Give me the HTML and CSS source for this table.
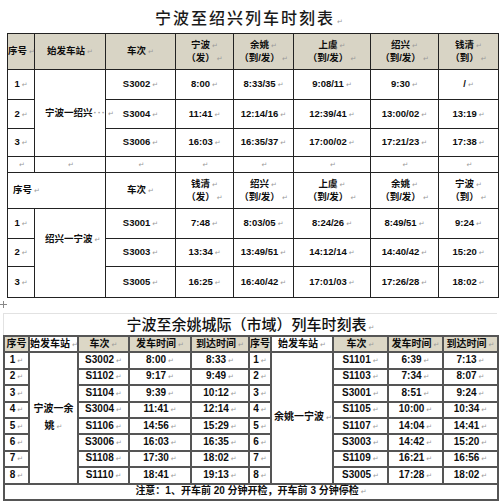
FILE: index.html
```html
<!DOCTYPE html>
<html lang="zh-CN">
<head>
<meta charset="utf-8">
<title>宁波至绍兴列车时刻表</title>
<link rel="stylesheet" href="styles.css">
</head>
<body>
<h1 class="title1">宁波至绍兴列车时刻表<span class="p">↵</span></h1>
<table class="t1">
<colgroup><col class="a1"><col class="a2"><col class="a3"><col class="a4"><col class="a5"><col class="a6"><col class="a7"><col class="a8"></colgroup>
<tr class="hdr shade">
<th>序号<span class="p">↵</span></th>
<th>始发车站<span class="p">↵</span></th>
<th>车次<span class="p">↵</span></th>
<th>宁波<span class="p">↵</span><br>（发）<span class="p">↵</span></th>
<th>余姚<span class="p">↵</span><br>（到/发）<span class="p">↵</span></th>
<th>上虞<span class="p">↵</span><br>（到/发）<span class="p">↵</span></th>
<th>绍兴<span class="p">↵</span><br>（到/发）<span class="p">↵</span></th>
<th>钱清<span class="p">↵</span><br>（到）<span class="p">↵</span></th>
</tr>
<tr class="row r30">
<td>1<span class="p">↵</span></td>
<td rowspan="3" class="stn">宁波一绍兴<span class="dots">···</span><span class="p">↵</span></td>
<td>S3002<span class="p">↵</span></td><td>8:00<span class="p">↵</span></td><td>8:33/35<span class="p">↵</span></td><td>9:08/11<span class="p">↵</span></td><td>9:30<span class="p">↵</span></td><td>/<span class="p">↵</span></td>
</tr>
<tr class="row r29">
<td>2<span class="p">↵</span></td>
<td>S3004<span class="p">↵</span></td><td>11:41<span class="p">↵</span></td><td>12:14/16<span class="p">↵</span></td><td>12:39/41<span class="p">↵</span></td><td>13:00/02<span class="p">↵</span></td><td>13:19<span class="p">↵</span></td>
</tr>
<tr class="row r28">
<td>3<span class="p">↵</span></td>
<td>S3006<span class="p">↵</span></td><td>16:03<span class="p">↵</span></td><td>16:35/37<span class="p">↵</span></td><td>17:00/02<span class="p">↵</span></td><td>17:21/23<span class="p">↵</span></td><td>17:38<span class="p">↵</span></td>
</tr>
<tr class="gap">
<td><span class="p">↵</span></td><td><span class="p">↵</span></td><td><span class="p">↵</span></td><td><span class="p">↵</span></td><td><span class="p">↵</span></td><td><span class="p">↵</span></td><td><span class="p">↵</span></td><td><span class="p">↵</span></td>
</tr>
<tr class="hdr">
<th colspan="2" class="lft">序号<span class="p">↵</span></th>
<th>车次<span class="p">↵</span></th>
<th>钱清<span class="p">↵</span><br>（发）<span class="p">↵</span></th>
<th>绍兴<span class="p">↵</span><br>（到/发）<span class="p">↵</span></th>
<th>上虞<span class="p">↵</span><br>（到/发）<span class="p">↵</span></th>
<th>余姚<span class="p">↵</span><br>（到/发）<span class="p">↵</span></th>
<th>宁波<span class="p">↵</span><br>（到）<span class="p">↵</span></th>
</tr>
<tr class="row r30">
<td>1<span class="p">↵</span></td>
<td rowspan="3" class="stn stn2">绍兴一宁波<span class="p">↵</span></td>
<td>S3001<span class="p">↵</span></td><td>7:48<span class="p">↵</span></td><td>8:03/05<span class="p">↵</span></td><td>8:24/26<span class="p">↵</span></td><td>8:49/51<span class="p">↵</span></td><td>9:24<span class="p">↵</span></td>
</tr>
<tr class="row r28">
<td>2<span class="p">↵</span></td>
<td>S3003<span class="p">↵</span></td><td>13:34<span class="p">↵</span></td><td>13:49/51<span class="p">↵</span></td><td>14:12/14<span class="p">↵</span></td><td>14:40/42<span class="p">↵</span></td><td>15:20<span class="p">↵</span></td>
</tr>
<tr class="row r31">
<td>3<span class="p">↵</span></td>
<td>S3005<span class="p">↵</span></td><td>16:25<span class="p">↵</span></td><td>16:40/42<span class="p">↵</span></td><td>17:01/03<span class="p">↵</span></td><td>17:26/28<span class="p">↵</span></td><td>18:02<span class="p">↵</span></td>
</tr>
</table>

<div class="title2">
<span class="handle"><svg width="7" height="7" viewBox="0 0 7 7"><path d="M3.5 0V7M0 3.5H7" stroke="#888" stroke-width="1"/></svg></span>
<h2>宁波至余姚城际（市域）列车时刻表<span class="p">↵</span></h2>
</div>
<table class="t2">
<colgroup><col class="b1"><col class="b2"><col class="b3"><col class="b4"><col class="b5"><col class="b6"><col class="b7"><col class="b8"><col class="b9"><col class="b10"></colgroup>
<tr class="h2row">
<th class="sh">序号</th><th>始发车站<span class="p">↵</span></th><th class="sh">车次<span class="p">↵</span></th><th class="sh">发车时间<span class="p">↵</span></th><th class="sh">到达时间<span class="p">↵</span></th>
<th class="sh">序号</th><th>始发车站<span class="p">↵</span></th><th class="sh">车次<span class="p">↵</span></th><th class="sh">发车时间<span class="p">↵</span></th><th class="sh">到达时间<span class="p">↵</span></th>
</tr>
<tr><td>1<span class="p">↵</span></td><td rowspan="8" class="stn3">宁波一余<br>姚<span class="p">↵</span></td><td>S3002<span class="p">↵</span></td><td>8:00<span class="p">↵</span></td><td>8:33<span class="p">↵</span></td>
<td>1<span class="p">↵</span></td><td rowspan="8" class="stn3">余姚一宁波<span class="p">↵</span></td><td>S1101<span class="p">↵</span></td><td>6:39<span class="p">↵</span></td><td>7:13<span class="p">↵</span></td></tr>
<tr><td>2<span class="p">↵</span></td><td>S1102<span class="p">↵</span></td><td>9:17<span class="p">↵</span></td><td>9:49<span class="p">↵</span></td>
<td>2<span class="p">↵</span></td><td>S1103<span class="p">↵</span></td><td>7:34<span class="p">↵</span></td><td>8:07<span class="p">↵</span></td></tr>
<tr><td>3<span class="p">↵</span></td><td>S1104<span class="p">↵</span></td><td>9:39<span class="p">↵</span></td><td>10:12<span class="p">↵</span></td>
<td>3<span class="p">↵</span></td><td>S3001<span class="p">↵</span></td><td>8:51<span class="p">↵</span></td><td>9:24<span class="p">↵</span></td></tr>
<tr><td>4<span class="p">↵</span></td><td>S3004<span class="p">↵</span></td><td>11:41<span class="p">↵</span></td><td>12:14<span class="p">↵</span></td>
<td>4<span class="p">↵</span></td><td>S1105<span class="p">↵</span></td><td>10:00<span class="p">↵</span></td><td>10:34<span class="p">↵</span></td></tr>
<tr><td>5<span class="p">↵</span></td><td>S1106<span class="p">↵</span></td><td>14:56<span class="p">↵</span></td><td>15:29<span class="p">↵</span></td>
<td>5<span class="p">↵</span></td><td>S1107<span class="p">↵</span></td><td>14:04<span class="p">↵</span></td><td>14:41<span class="p">↵</span></td></tr>
<tr><td>6<span class="p">↵</span></td><td>S3006<span class="p">↵</span></td><td>16:03<span class="p">↵</span></td><td>16:35<span class="p">↵</span></td>
<td>6<span class="p">↵</span></td><td>S3003<span class="p">↵</span></td><td>14:42<span class="p">↵</span></td><td>15:20<span class="p">↵</span></td></tr>
<tr><td>7<span class="p">↵</span></td><td>S1108<span class="p">↵</span></td><td>17:30<span class="p">↵</span></td><td>18:02<span class="p">↵</span></td>
<td>7<span class="p">↵</span></td><td>S1109<span class="p">↵</span></td><td>16:21<span class="p">↵</span></td><td>16:56<span class="p">↵</span></td></tr>
<tr><td>8<span class="p">↵</span></td><td>S1110<span class="p">↵</span></td><td>18:41<span class="p">↵</span></td><td>19:13<span class="p">↵</span></td>
<td>8<span class="p">↵</span></td><td>S3005<span class="p">↵</span></td><td>17:28<span class="p">↵</span></td><td>18:02<span class="p">↵</span></td></tr>
<tr><td colspan="10" class="note">注意：1、开车前 20 分钟开检，开车前 3 分钟停检<span class="p">↵</span></td></tr>
</table>
</body>
</html>
```

FILE: styles.css
```css
* { box-sizing: border-box; }
html, body { margin: 0; padding: 0; background: #fff; }
body {
  width: 500px;
  font-family: "Liberation Sans", "Noto Sans CJK SC", sans-serif;
  color: #111;
}
.p {
  font-family: "DejaVu Sans", sans-serif;
  font-size: 7px;
  font-weight: normal;
  color: #9a9a9a;
  margin-left: 2px;
}
.dots { color: #9a9a9a; letter-spacing: 1px; margin-left: 1px; }

.title1 {
  margin: 0;
  height: 33px;
  padding-top: 7px;
  text-align: center;
  font-family: "Noto Sans CJK SC", sans-serif;
  font-size: 16px;
  font-weight: 500;
  letter-spacing: 2px;
  line-height: 20px;
  color: #1a1a1a;
}

.t1 {
  margin-left: 7px;
  width: 491px;
  table-layout: fixed;
  border-collapse: collapse;
  font-size: 9.5px;
  font-weight: bold;
}
.t1 .a1 { width: 27px; }
.t1 .a2 { width: 71px; }
.t1 .a3 { width: 70px; }
.t1 .a4 { width: 58px; }
.t1 .a5 { width: 60px; }
.t1 .a6 { width: 77px; }
.t1 .a7 { width: 68px; }
.t1 .a8 { width: 60px; }
.t1 th, .t1 td {
  border: 1px solid #222;
  padding: 0;
  text-align: center;
  vertical-align: middle;
  line-height: 12px;
  white-space: nowrap;
  color: #0d0d0d;
  font-family: "Liberation Sans", "Noto Sans CJK SC", sans-serif;
}
.t1 .hdr { height: 36px; }
.t1 .shade th { background: #d8d4c5; }
.t1 .r28 { height: 28px; }
.t1 .r29 { height: 29px; }
.t1 .r30 { height: 30px; }
.t1 .r31 { height: 31px; }
.t1 .gap { height: 16px; }
.t1 .lft { text-align: left; padding-left: 5px; }
.t1 .stn { text-align: left; padding-left: 10px; overflow: visible; }
.t1 .stn2 { vertical-align: top; padding-top: 24px; }

.title2 {
  position: relative;
  margin: 15px 3px 0 3px;
  height: 22px;
  border-top: 1px solid #e2e2e2;
  border-left: 1px solid #e2e2e2;
}
.title2 h2 {
  margin: 0;
  text-align: center;
  font-family: "Noto Sans CJK SC", sans-serif;
  font-size: 15px;
  font-weight: 500;
  line-height: 20px;
  color: #111;
}
.handle {
  position: absolute;
  left: -4px;
  top: -13px;
  line-height: 0;
}

.t2 {
  margin-left: 3px;
  width: 494px;
  table-layout: fixed;
  border-collapse: collapse;
  font-size: 10px;
  font-weight: bold;
}
.t2 .b1 { width: 25px; }
.t2 .b2 { width: 49px; }
.t2 .b3 { width: 51px; }
.t2 .b4 { width: 62px; }
.t2 .b5 { width: 58px; }
.t2 .b6 { width: 22px; }
.t2 .b7 { width: 62px; }
.t2 .b8 { width: 55px; }
.t2 .b9 { width: 55px; }
.t2 .b10 { width: 55px; }
.t2 tr { height: 16.4px; }
.t2 th, .t2 td {
  border: 2px solid #555;
  padding: 0;
  text-align: center;
  vertical-align: middle;
  line-height: 12px;
  white-space: nowrap;
  color: #0d0d0d;
}
.t2 th { font-weight: bold; }
.t2 .sh { background: #dcd7c6; }
.t2 .stn3 { padding: 0 2px; line-height: 17px; }
.t2 .note { text-align: center; }
```
